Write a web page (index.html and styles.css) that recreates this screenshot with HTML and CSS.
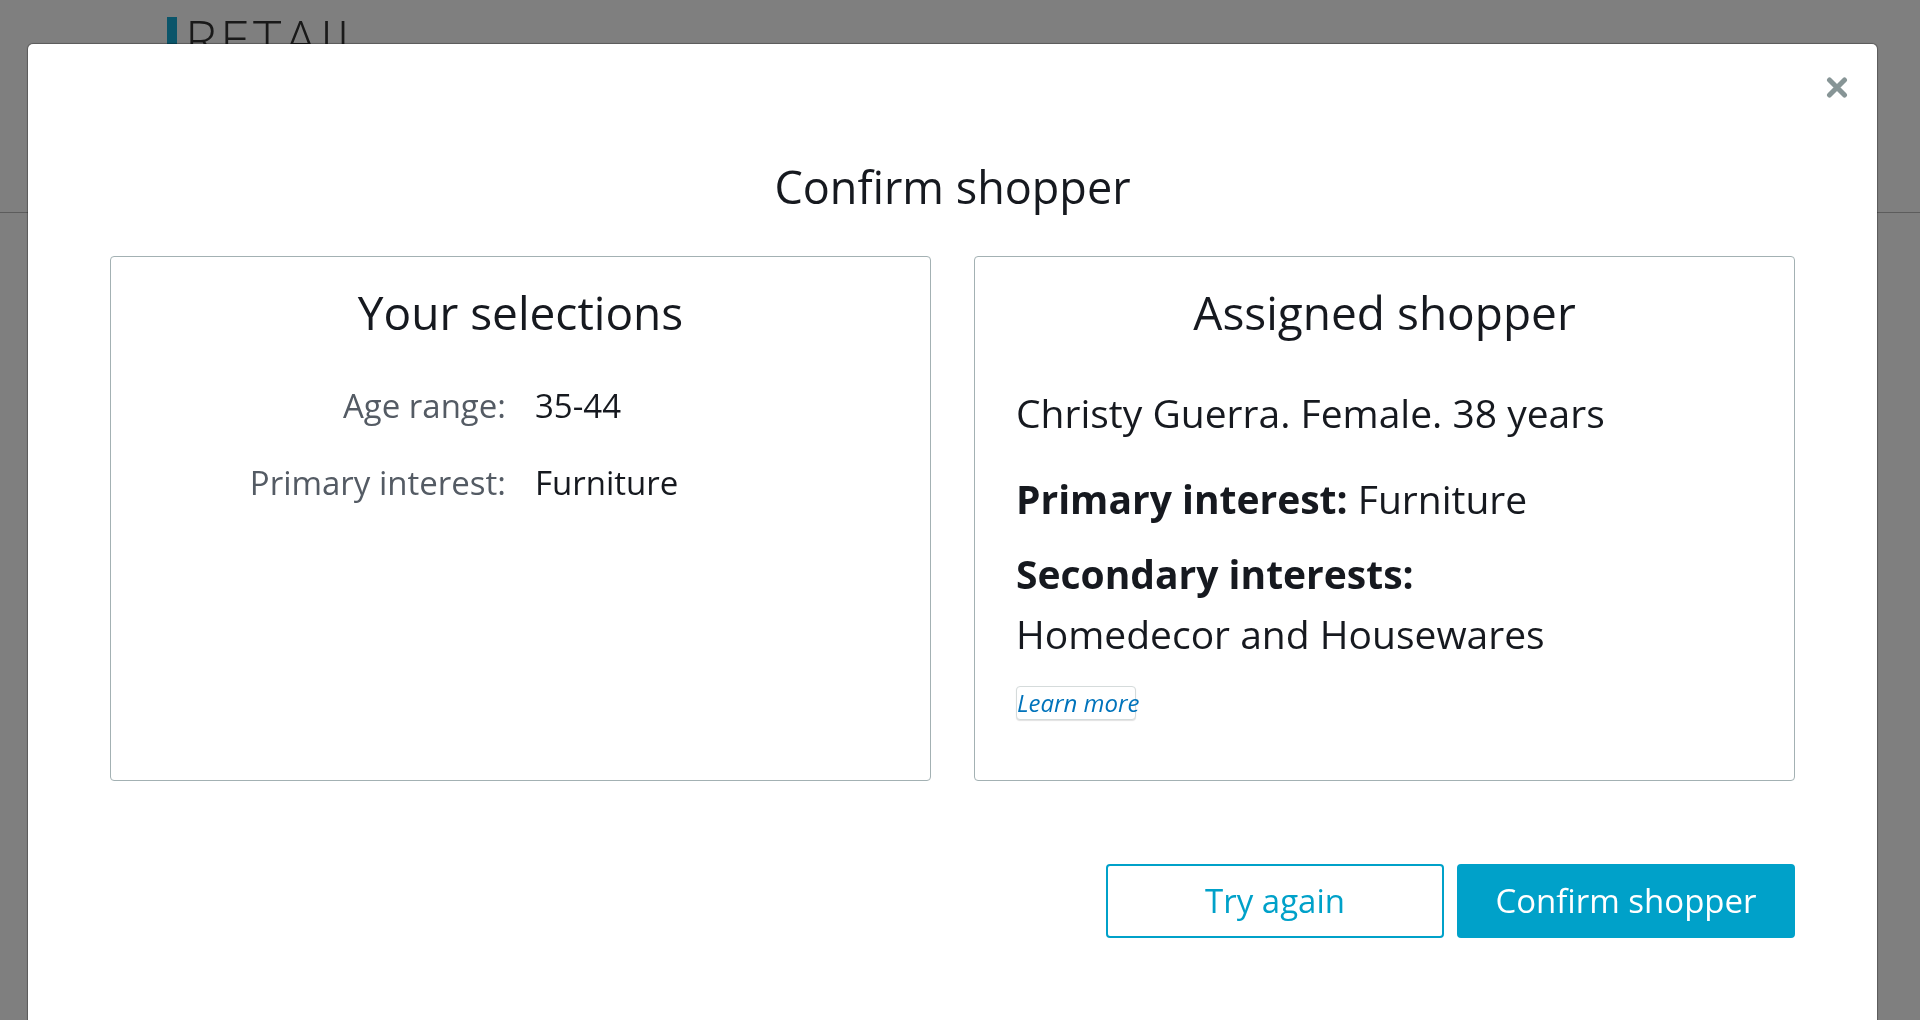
FILE: index.html
```html
<!DOCTYPE html>
<html lang="en">
<head>
<meta charset="utf-8">
<title>Confirm shopper</title>
<link rel="stylesheet" href="styles.css">
</head>
<body>
<header class="app-header">
  <div class="logo">
    <span class="logo-bar"></span>
    <span class="logo-text">RETAIL</span>
  </div>
</header>

<div class="overlay">
  <div class="modal" role="dialog" aria-labelledby="modal-title">
    <button class="close" aria-label="Close">
      <svg width="22" height="23" viewBox="0 0 22 23" aria-hidden="true">
        <path d="M3.5 4 L18.5 19 M18.5 4 L3.5 19" stroke="#879596" stroke-width="5" stroke-linecap="round" fill="none"/>
      </svg>
    </button>

    <h1 class="modal-title" id="modal-title">Confirm shopper</h1>

    <div class="cards">
      <section class="card">
        <h2 class="card-title">Your selections</h2>
        <dl class="selections">
          <dt>Age range:</dt>
          <dd>35-44</dd>
          <dt>Primary interest:</dt>
          <dd>Furniture</dd>
        </dl>
      </section>

      <section class="card card-shopper">
        <h2 class="card-title">Assigned shopper</h2>
        <p class="shopper-name">Christy Guerra. Female. 38 years</p>
        <p class="shopper-primary"><strong>Primary interest:</strong> Furniture</p>
        <p class="shopper-secondary"><strong>Secondary interests:</strong></p>
        <p class="shopper-sub">Homedecor and Housewares</p>
        <button class="learn-more">Learn more</button>
      </section>
    </div>

    <div class="actions">
      <button class="btn btn-secondary">Try again</button>
      <button class="btn btn-primary">Confirm shopper</button>
    </div>
  </div>
</div>
</body>
</html>
```

FILE: styles.css
```css
* {
  box-sizing: border-box;
}

html, body {
  margin: 0;
  padding: 0;
  height: 100%;
}

body {
  background: #ffffff;
  font-family: "Open Sans", "Noto Sans", "Liberation Sans", sans-serif;
  color: #16191f;
  overflow: hidden;
}

/* Page behind the dialog */
.app-header {
  height: 213px;
  border-bottom: 1px solid #b8b8b8;
  padding: 17px 0 0 167px;
}

.logo {
  display: flex;
  align-items: flex-start;
}

.logo-bar {
  width: 10px;
  height: 44px;
  background: #16aad4;
}

.logo-text {
  margin-left: 8px;
  margin-top: -6px;
  font-size: 54px;
  line-height: 54px;
  font-weight: 300;
  letter-spacing: 3px;
  color: #333333;
}

/* Overlay + dialog */
.overlay {
  position: fixed;
  inset: 0;
  background: rgba(0, 0, 0, 0.5);
  padding: 44px 0 0 28px;
  overflow: hidden;
}

.modal {
  position: relative;
  width: 1849px;
  height: 1100px;
  background: #ffffff;
  border-radius: 5px;
  box-shadow: 0 0 1px 1px rgba(0, 0, 0, 0.3);
  padding: 115px 82px 0;
}

.close {
  position: absolute;
  top: 32px;
  right: 29px;
  width: 22px;
  height: 23px;
  padding: 0;
  border: 0;
  background: transparent;
  cursor: pointer;
  display: block;
}

.close svg {
  display: block;
}

.modal-title {
  margin: 0;
  font-size: 45px;
  line-height: 56px;
  font-weight: 400;
  text-align: center;
  color: #16191f;
}

.cards {
  margin-top: 41px;
  display: grid;
  grid-template-columns: 1fr 1fr;
  column-gap: 43px;
}

.card {
  height: 525px;
  border: 1px solid #a3b1b3;
  border-radius: 4px;
  padding: 27px 41px 0;
}

.card-title {
  margin: 0;
  font-size: 46px;
  line-height: 56px;
  font-weight: 400;
  text-align: center;
  color: #16191f;
}

.selections {
  margin: 44px 0 0;
  display: grid;
  grid-template-columns: 1fr 1fr;
  column-gap: 29px;
  row-gap: 33px;
  font-size: 33px;
  line-height: 44px;
}

.selections dt {
  text-align: right;
  color: #545b64;
}

.selections dd {
  margin: 0;
  color: #16191f;
}

.card-shopper p {
  margin: 0;
  font-size: 39px;
  line-height: 50px;
  color: #16191f;
  white-space: nowrap;
}

.card-shopper strong {
  font-weight: 700;
}

.card-shopper .shopper-name {
  margin-top: 48px;
}

.card-shopper .shopper-primary {
  margin-top: 36px;
}

.card-shopper .shopper-secondary {
  margin-top: 25px;
}

.card-shopper .shopper-sub {
  margin-top: 10px;
}

.learn-more {
  display: block;
  margin-top: 27px;
  width: 120px;
  height: 34px;
  padding: 0;
  border: 1px solid #d5dbdb;
  border-radius: 4px;
  background: #ffffff;
  box-shadow: 0 1px 1px rgba(0, 0, 0, 0.12);
  font-family: "Open Sans", "Noto Sans", sans-serif;
  font-size: 24px;
  line-height: 32px;
  font-style: italic;
  font-weight: 500;
  color: #0073bb;
  text-align: left;
  white-space: nowrap;
  overflow: visible;
  cursor: pointer;
}

.actions {
  margin-top: 83px;
  display: flex;
  justify-content: flex-end;
  gap: 13px;
}

.btn {
  width: 338px;
  height: 74px;
  border: 2px solid #00a1c9;
  border-radius: 4px;
  font-family: "Open Sans", "Noto Sans", sans-serif;
  font-size: 33px;
  line-height: 70px;
  font-weight: 500;
  padding: 0;
  cursor: pointer;
}

.btn-secondary {
  background: #ffffff;
  color: #00a1c9;
}

.btn-primary {
  background: #00a1c9;
  color: #ffffff;
}
```
